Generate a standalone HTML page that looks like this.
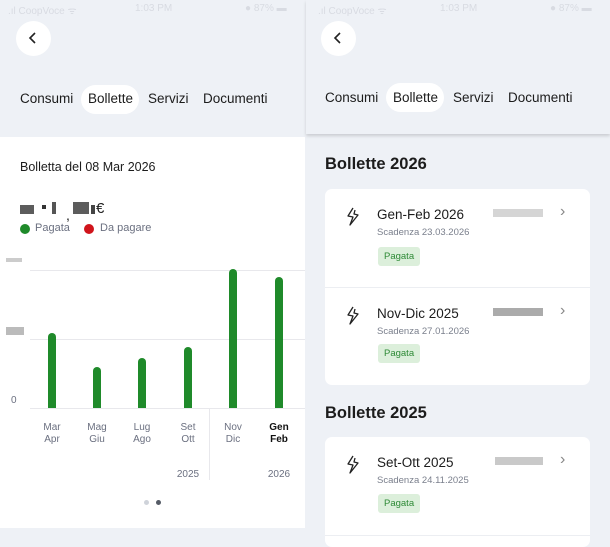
<!DOCTYPE html>
<html><head><meta charset="utf-8"><style>
*{margin:0;padding:0;box-sizing:border-box}
body{width:610px;height:542px;overflow:hidden;background:#eef1f6;font-family:"Liberation Sans",sans-serif;color:#1c1c1c;position:relative}
.a{position:absolute;white-space:nowrap}
.back{width:35px;height:35px;border-radius:50%;background:#fff}
.tab{font-size:13.5px;top:91px}
.pill{background:#fff;border-radius:15px;height:29px}
.card{background:#fff;border-radius:7px}
.bar{position:absolute;width:8px;background:#1f8a2a;border-radius:4px 4px 0 0;bottom:134px}
.lbl{font-size:10px;color:#6b7080;text-align:center;width:30px;line-height:12px}
.title{font-size:13.5px}
.sub{font-size:9.5px;color:#7a7f8c}
.badge{background:#dcefdb;color:#2e8a36;font-size:9.5px;border-radius:3px;padding:4px 6px}
.chev{font-size:16px;color:#888}
.blur{background:#888;opacity:.6;height:8px}
.st{font-size:10px;color:#d8dbe2;top:3px}
</style></head><body>
<!-- left panel -->
<div class="a back" style="left:16px;top:21px"></div>
<svg class="a" style="left:26px;top:31px" width="14" height="14"><path d="M9 2L4 7L9 12" stroke="#222" stroke-width="1.6" fill="none"/></svg>
<div class="a pill" style="left:81px;top:85px;width:58px"></div>
<div class="a tab" style="left:20px">Consumi</div>
<div class="a tab" style="left:88px">Bollette</div>
<div class="a tab" style="left:148px">Servizi</div>
<div class="a tab" style="left:203px">Documenti</div>

<div class="a" style="left:0;top:137px;width:305px;height:391px;background:#fff"></div>
<div class="a" style="left:20px;top:160px;font-size:12.5px">Bolletta del 08 Mar 2026</div>
<div class="a" style="left:20px;top:202px;width:85px;height:14px">
 <div class="a" style="left:0;top:3px;width:14px;height:9px;background:#333;opacity:.8"></div>
 <div class="a" style="left:22px;top:3px;width:4px;height:4px;background:#333"></div>
 <div class="a" style="left:32px;top:0;width:4px;height:12px;background:#555"></div>
 <div class="a" style="left:46px;top:5px;font-size:14px">,</div>
 <div class="a" style="left:53px;top:0;width:16px;height:12px;background:#333;opacity:.8"></div>
 <div class="a" style="left:71px;top:3px;width:4px;height:9px;background:#444"></div>
 <div class="a" style="left:76px;top:-2px;font-size:15px">€</div>
</div>
<div class="a" style="left:20px;top:224px;width:10px;height:10px;border-radius:50%;background:#1f8a2a"></div>
<div class="a" style="left:35px;top:222px;font-size:11px;color:#6b7080">Pagata</div>
<div class="a" style="left:84px;top:224px;width:10px;height:10px;border-radius:50%;background:#d0141b"></div>
<div class="a" style="left:100px;top:222px;font-size:11px;color:#6b7080">Da pagare</div>

<div class="a" style="left:30px;top:270px;width:275px;height:1px;background:#e8e8ec"></div>
<div class="a" style="left:30px;top:339px;width:275px;height:1px;background:#e8e8ec"></div>
<div class="a" style="left:30px;top:408px;width:275px;height:1px;background:#e8e8ec"></div>
<div class="a" style="left:209px;top:408px;width:1px;height:72px;background:#e8e8ec"></div>
<div class="a" style="left:6px;top:258px;width:16px;height:4px;background:#ccc"></div>
<div class="a" style="left:6px;top:327px;width:18px;height:8px;background:#bbb"></div>
<div class="a" style="left:11px;top:395px;font-size:10px;color:#6b7080">0</div>

<div class="bar" style="left:48px;height:75px"></div>
<div class="bar" style="left:93px;height:41px"></div>
<div class="bar" style="left:138px;height:50px"></div>
<div class="bar" style="left:184px;height:61px"></div>
<div class="bar" style="left:229px;height:139px"></div>
<div class="bar" style="left:275px;height:131px"></div>

<div class="a lbl" style="left:37px;top:422px">Mar<br>Apr</div>
<div class="a lbl" style="left:82px;top:422px">Mag<br>Giu</div>
<div class="a lbl" style="left:127px;top:422px">Lug<br>Ago</div>
<div class="a lbl" style="left:173px;top:422px">Set<br>Ott</div>
<div class="a lbl" style="left:218px;top:422px">Nov<br>Dic</div>
<div class="a lbl" style="left:264px;top:422px;color:#111;font-weight:bold">Gen<br>Feb</div>
<div class="a lbl" style="left:173px;top:469px">2025</div>
<div class="a lbl" style="left:264px;top:469px">2026</div>
<div class="a" style="left:144px;top:500px;width:5px;height:5px;border-radius:50%;background:#cfd3da"></div>
<div class="a" style="left:156px;top:500px;width:5px;height:5px;border-radius:50%;background:#555b66"></div>

<!-- right panel -->
<div class="a" style="left:306px;top:0;width:304px;height:134px;background:#eef1f6;box-shadow:0 2px 3px rgba(0,0,0,.15)"></div>
<div class="a back" style="left:321px;top:21px"></div>
<svg class="a" style="left:331px;top:31px" width="14" height="14"><path d="M9 2L4 7L9 12" stroke="#222" stroke-width="1.6" fill="none"/></svg>
<div class="a pill" style="left:386px;top:83px;width:58px"></div>
<div class="a tab" style="left:325px;top:90px">Consumi</div>
<div class="a tab" style="left:393px;top:90px">Bollette</div>
<div class="a tab" style="left:453px;top:90px">Servizi</div>
<div class="a tab" style="left:508px;top:90px">Documenti</div>

<!-- status bars -->
<div class="a st" style="left:8px">.ıl CoopVoce ᯤ</div>
<div class="a st" style="left:135px">1:03 PM</div>
<div class="a st" style="left:245px">● 87% ▬</div>
<div class="a st" style="left:318px">.ıl CoopVoce ᯤ</div>
<div class="a st" style="left:440px">1:03 PM</div>
<div class="a st" style="left:550px">● 87% ▬</div>

<div class="a" style="left:325px;top:155px;font-size:16.5px;font-weight:bold">Bollette 2026</div>
<div class="a card" style="left:325px;top:189px;width:265px;height:196px"></div>
<div class="a" style="left:325px;top:287px;width:265px;height:1px;background:#eceef2"></div>

<svg class="a" style="left:345px;top:206px" width="16" height="22"><path d="M8 2L3 10L8 11L5 19L13 9L9 8L10 4" stroke="#222" stroke-width="1.3" fill="none" stroke-linejoin="round"/></svg>
<div class="a title" style="left:377px;top:207px">Gen-Feb 2026</div>
<div class="a sub" style="left:377px;top:227px">Scadenza 23.03.2026</div>
<div class="a badge" style="left:378px;top:247px">Pagata</div>
<div class="a blur" style="left:493px;top:209px;width:50px;opacity:.35"></div>
<div class="a chev" style="left:560px;top:203px">›</div>

<svg class="a" style="left:345px;top:305px" width="16" height="22"><path d="M8 2L3 10L8 11L5 19L13 9L9 8L10 4" stroke="#222" stroke-width="1.3" fill="none" stroke-linejoin="round"/></svg>
<div class="a title" style="left:377px;top:306px">Nov-Dic 2025</div>
<div class="a sub" style="left:377px;top:326px">Scadenza 27.01.2026</div>
<div class="a badge" style="left:378px;top:344px">Pagata</div>
<div class="a blur" style="left:493px;top:308px;width:50px;opacity:.7"></div>
<div class="a chev" style="left:560px;top:302px">›</div>

<div class="a" style="left:325px;top:404px;font-size:16.5px;font-weight:bold">Bollette 2025</div>
<div class="a card" style="left:325px;top:437px;width:265px;height:110px"></div>
<div class="a" style="left:325px;top:535px;width:265px;height:1px;background:#eceef2"></div>
<svg class="a" style="left:345px;top:454px" width="16" height="22"><path d="M8 2L3 10L8 11L5 19L13 9L9 8L10 4" stroke="#222" stroke-width="1.3" fill="none" stroke-linejoin="round"/></svg>
<div class="a title" style="left:377px;top:455px">Set-Ott 2025</div>
<div class="a sub" style="left:377px;top:475px">Scadenza 24.11.2025</div>
<div class="a badge" style="left:378px;top:494px">Pagata</div>
<div class="a blur" style="left:495px;top:457px;width:48px;opacity:.45"></div>
<div class="a chev" style="left:560px;top:451px">›</div>
</body></html>
